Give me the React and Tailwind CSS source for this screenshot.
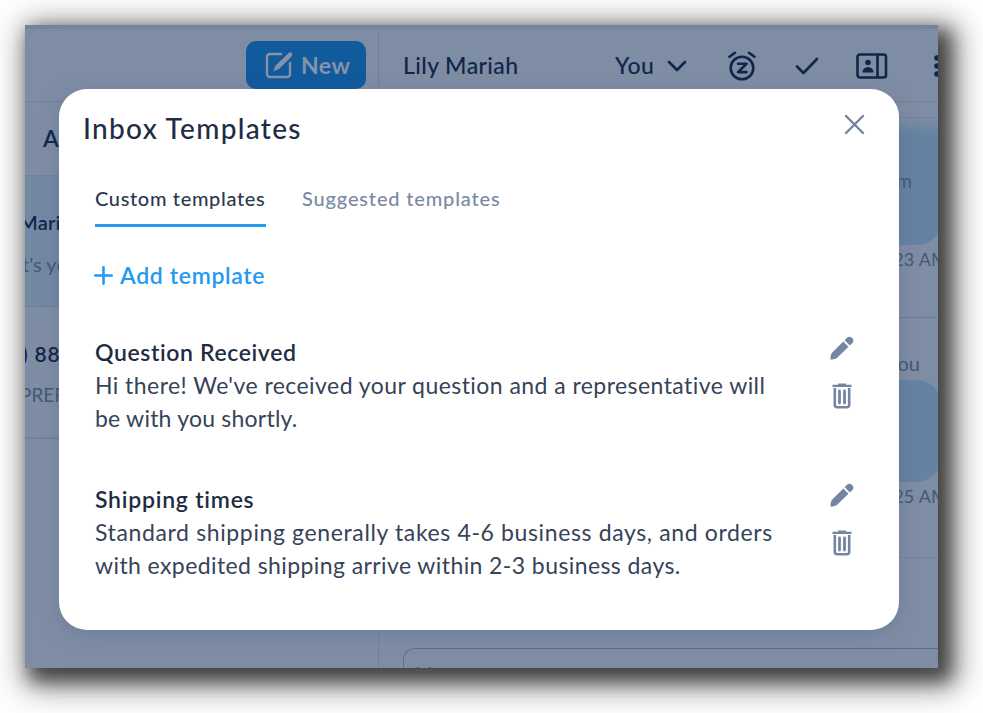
import { useState } from 'react';

const tabs = [
    { name: 'Custom templates', className: 'w-[171px] tracking-[0.66px]' },
    { name: 'Suggested templates', className: 'w-[202px] tracking-[0.84px]' },
];

const templates = [
    {
        title: 'Question Received',
        titleClass: 'tracking-[0.62px]',
        lines: [
            { text: "Hi there! We've received your question and a representative will", className: 'tracking-[0.44px]' },
            { text: 'be with you shortly.', className: 'tracking-[0.22px]' },
        ],
    },
    {
        title: 'Shipping times',
        titleClass: 'tracking-[0.76px]',
        lines: [
            { text: 'Standard shipping generally takes 4-6 business days, and orders', className: 'tracking-[0.63px]' },
            { text: 'with expedited shipping arrive within 2-3 business days.', className: 'tracking-[0.41px]' },
        ],
    },
];

const ComposeIcon = () => (
    <svg width="28" height="28" viewBox="0 0 28 28" fill="none" stroke="#8592a9" strokeWidth="2.4" strokeLinecap="round" strokeLinejoin="round">
        <path d="M16 3H4.800A2.800 2.800 0 0 0 2 5.800V23.200A2.800 2.800 0 0 0 4.800 26H22.200A2.800 2.800 0 0 0 25 23.200V12" />
        <path d="M24 2 27 5 14 18 8.300 20.300 10.600 14.600Z" fill="#8592a9" stroke="none" />
        <path d="M25.300 3.300 12.600 16" strokeWidth="4" />
    </svg>
);

const SnoozeIcon = () => (
    <svg width="30" height="32" viewBox="0 0 30 32" fill="none" stroke="#10254a" strokeWidth="2.6" strokeLinecap="round" strokeLinejoin="round">
        <circle cx="15" cy="18" r="11.300" />
        <path d="M2.500 6.800 8 2.800M22 2.800 27.500 6.800" />
        <path d="M11 13.800H19.500L11 22.100H19.500" />
    </svg>
);

const ContactIcon = () => (
    <svg width="32" height="26" viewBox="0 0 32 26" fill="none" stroke="#10254a" strokeWidth="2.600">
        <rect x="1.500" y="1.500" width="28.500" height="23" rx="2.500" />
        <path d="M21.500 1.500V24.500" />
        <circle cx="12" cy="9.500" r="2.800" fill="#10254a" stroke="none" />
        <path d="M6.500 19.500C6.500 16 9 14.300 12 14.300S17.500 16 17.500 19.500Z" fill="#10254a" stroke="none" />
    </svg>
);

const PencilIcon = () => (
    <svg width="24" height="24" viewBox="0 0 24 24" fill="#7485a1">
        <path d="M13.300 5.500 18.500 10.700 7.400 21.500C5.900 22.900 3.200 23.500.5 23.500 .4 20.500.9 17.800 2.300 16.400Z" />
        <path d="M14.600 4.200 17 1.800C18.300.5 20.300.5 21.600 1.500L22.500 2.400C23.700 3.700 23.700 5.700 22.400 7L19.900 9.400Z" />
    </svg>
);

const TrashIcon = () => (
    <svg width="20" height="26" viewBox="0 0 20 26" fill="none" stroke="#7485a1">
        <path d="M.5 2.900H19.500M6 1.600H14" strokeWidth="2.200" />
        <path d="M2.800 5V22A2.300 2.300 0 0 0 5.100 24.200H14.900A2.300 2.300 0 0 0 17.200 22V5" strokeWidth="2.600" />
        <path d="M7.500 8V20M12.500 8V20" strokeWidth="2.800" strokeLinecap="round" />
    </svg>
);

const Sidebar = () => (
    <div className="w-[354px] shrink-0 border-r border-[#71809d]">
        <div className="flex h-[73px] justify-end border-b border-[#71809d] pt-3 pr-3">
            <button className="flex h-12 w-[120px] items-center rounded-[10px] bg-[#115a9c] pl-[19px] text-[23px] font-bold text-[#8592a9]">
                <ComposeIcon />
                <span className="ml-[8px] tracking-[0.5px]">New</span>
            </button>
        </div>
        <div className="h-[74px] border-b border-[#71809d] pt-[20px] pl-[18px] text-[23px] leading-8 font-semibold">All</div>
        <div className="h-[131px] border-b border-[#677d9e] bg-[#7388a3] whitespace-nowrap">
            <div className="-ml-[6px] pt-[32px] text-[20px] leading-7 font-semibold tracking-[0.2px]">Mariah</div>
            <div className="-ml-[3px] pt-[14px] text-xl leading-7 text-[#435878]">t's you</div>
        </div>
        <div className="h-[132px] border-b-2 border-[#71809d] whitespace-nowrap">
            <div className="-ml-[3px] pt-[33px] text-[21px] leading-7 font-semibold tracking-[0.8px]">) 888</div>
            <div className="-ml-[5px] pt-[13px] text-[19px] leading-7 text-[#435878]">PREFER</div>
        </div>
    </div>
);

const Conversation = () => (
    <div className="flex min-w-0 flex-1 flex-col">
        <div className="flex h-[73px] shrink-0 items-center border-b border-[#71809d] pt-px text-[23px] font-medium whitespace-nowrap">
            <span className="ml-6 w-[212px] shrink-0 tracking-[0.4px]">Lily Mariah</span>
            <span className="w-[52px] shrink-0 tracking-[0.5px]">You</span>
            <svg className="shrink-0" width="20" height="12" viewBox="0 0 20 12" fill="none" stroke="#10254a" strokeWidth="2.600" strokeLinecap="round" strokeLinejoin="round">
                <path d="M2 2 10 10 18 2" />
            </svg>
            <span className="ml-10 shrink-0"><SnoozeIcon /></span>
            <svg className="ml-[38px] shrink-0" width="24" height="18" viewBox="0 0 24 18" fill="none" stroke="#10254a" strokeWidth="2.600" strokeLinecap="round" strokeLinejoin="round">
                <path d="M2 9.500 8.500 16 22 2" />
            </svg>
            <span className="ml-[37px] shrink-0"><ContactIcon /></span>
            <svg className="ml-[46px] shrink-0" width="6" height="24" viewBox="0 0 6 24" fill="#10254a">
                <circle cx="3" cy="4" r="2.800" />
                <circle cx="3" cy="12" r="2.800" />
                <circle cx="3" cy="20" r="2.800" />
            </svg>
        </div>
        <div className="h-4 shrink-0 border-b border-[#71809d]" />
        <div className="flex h-[200px] shrink-0 flex-col items-end border-b border-[#677b9b] text-[#435878]">
            <div className="-mr-[3px] h-[127px] w-60 rounded-b-3xl bg-linear-to-b from-[#7f8da4] to-[#6682a1] to-[16px] pt-[49px] pr-[29px] text-right text-[19px] leading-7">m</div>
            <div className="-mr-[10px] text-lg leading-7 tracking-[0.2px]">9:23 AM</div>
        </div>
        <div className="flex h-60 shrink-0 flex-col items-end border-b border-[#71809d] text-[#435878]">
            <div className="h-[62px] pt-[31px] pr-[18px] text-[20px] leading-7">You</div>
            <div className="-mr-[3px] h-[102px] w-60 rounded-3xl bg-[#6682a1]" />
            <div className="-mr-[10px] text-lg leading-7 tracking-[0.2px]">9:25 AM</div>
        </div>
        <div className="mt-[90px] ml-6 h-20 shrink-0 rounded-tl-xl border-t border-l border-[#5c6d90] pt-[11px] pl-[11px] text-[19px] leading-7 text-[#435878]">Message</div>
    </div>
);

const TemplateRow = ({ template }) => (
    <div className="flex h-[147px] justify-between">
        <div className="text-[23px] leading-[33px] whitespace-nowrap text-[#364358]">
            <h3 className={`font-semibold text-[#1f2d43] ${template.titleClass}`}>{template.title}</h3>
            {template.lines.map((line) => (
                <p key={line.text} className={line.className}>{line.text}</p>
            ))}
        </div>
        <div className="mr-[45px] flex w-6 flex-col items-center">
            <PencilIcon />
            <span className="mt-[23px]"><TrashIcon /></span>
        </div>
    </div>
);

const TemplatesModal = () => {
    const [activeTab, setActiveTab] = useState('Custom templates');

    return (
        <div className="absolute top-16 left-[34px] h-[541px] w-[840px] rounded-[28px] bg-white shadow-[0_4px_20px_rgba(70,85,130,0.28)]">
            <div className="flex justify-between pt-[21px] pr-[34px] pl-6">
                <h2 className="text-[28px] leading-9 font-medium tracking-[1.3px] text-[#1f2d43]">Inbox Templates</h2>
                <svg className="mt-[4px]" width="21" height="21" viewBox="0 0 21 21" fill="none" stroke="#7485a1" strokeWidth="2.400" strokeLinecap="round">
                    <path d="M2 2 19 19M19 2 2 19" />
                </svg>
            </div>
            <div className="mt-[38px] flex gap-9 pl-9 text-xl leading-7 font-medium whitespace-nowrap">
                {tabs.map((tab) => (
                    <button
                        key={tab.name}
                        onClick={() => setActiveTab(tab.name)}
                        className={`${tab.className} h-[43px] border-b-3 pb-[12px] text-left ${
                            activeTab === tab.name ? 'border-[#2499f0] text-[#2c394e]' : 'border-transparent text-[#7a89a4]'
                        }`}
                    >
                        {tab.name}
                    </button>
                ))}
            </div>
            <button className="mt-8 flex h-8 items-center pl-[35px] text-[23px] font-semibold text-[#2499f0]">
                <svg width="19" height="19" viewBox="0 0 19 19" fill="none" stroke="#2499f0" strokeWidth="2.600" strokeLinecap="round">
                    <path d="M9.500 1.300V17.700M1.300 9.500H17.700" />
                </svg>
                <span className="ml-[7px] tracking-[0.65px]">Add template</span>
            </button>
            <div className="mt-[45px] pl-9">
                {templates.map((template) => (
                    <TemplateRow key={template.title} template={template} />
                ))}
            </div>
        </div>
    );
};

const App = () => (
    <div className="h-[713px] w-[983px] overflow-hidden bg-white p-[25px] font-['Lato',sans-serif]">
        <div className="h-[643px] w-[913px] shadow-[9px_9px_16px_4px_rgba(0,0,0,0.5),9px_9px_30px_9px_rgba(0,0,0,0.5)]">
            <div className="relative h-full overflow-hidden border-t-4 border-[#73849e] bg-[#7f8da4] text-[#10254a]">
                <div className="flex h-full">
                    <Sidebar />
                    <Conversation />
                </div>
                <div className="absolute inset-x-0 -top-1 h-[643px]">
                    <TemplatesModal />
                </div>
            </div>
        </div>
    </div>
);

export default App;
